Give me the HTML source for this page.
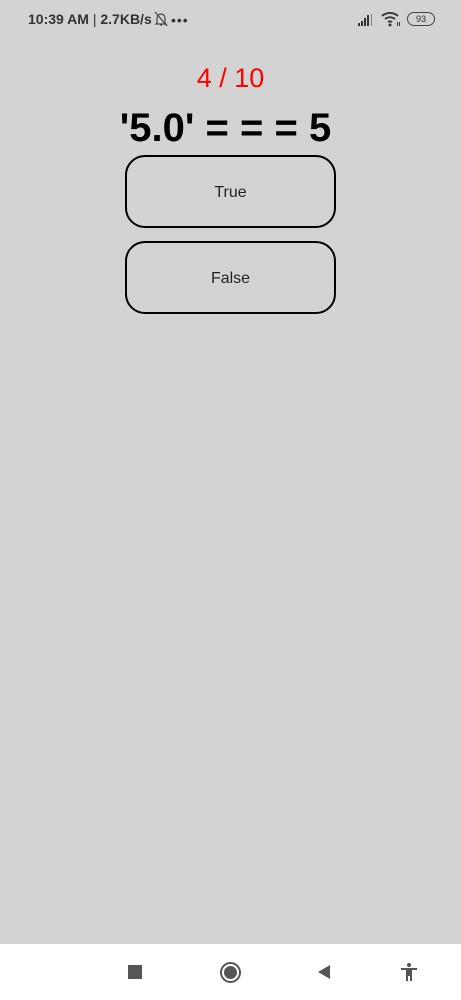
<!DOCTYPE html><html><head><style>
body{margin:0;width:461px;height:1000px;background:#d3d3d3;font-family:"Liberation Sans",sans-serif;position:relative;overflow:hidden}
.a{position:absolute}
.btn{position:absolute;left:125px;width:207px;height:69px;border:2px solid #000;border-radius:20px;text-align:center;line-height:71px;font-size:16px;color:#222}
</style></head><body>
<div class="a" style="left:28px;top:11px;font-size:14px;font-weight:bold;color:#333">10:39 AM <span style="font-weight:normal">|</span> 2.7KB/s</div>
<svg class="a" style="left:154px;top:11px" width="14" height="16" viewBox="0 0 14 16"><path d="M3 12V7a4 4 0 0 1 8 0v5l1 1H2z M6 14h2 M1 1l12 14" stroke="#444" fill="none" stroke-width="1.2"/></svg>
<div class="a" style="left:171px;top:12px;font-size:14px;color:#333;letter-spacing:1px">•••</div>
<svg class="a" style="left:357px;top:13px" width="18" height="14"><rect x="1" y="10" width="2" height="3" fill="#333"/><rect x="4" y="8" width="2" height="5" fill="#333"/><rect x="7" y="5" width="2" height="8" fill="#333"/><rect x="10" y="2" width="2" height="11" fill="#333"/><rect x="14" y="1" width="1" height="12" fill="#888"/></svg>
<svg class="a" style="left:381px;top:11px" width="20" height="16" viewBox="0 0 20 16"><path d="M1 5a12 12 0 0 1 16 0M4 8a8 8 0 0 1 10 0M7 11a4 4 0 0 1 4 0" stroke="#333" stroke-width="1.8" fill="none"/><circle cx="9" cy="14" r="1.5" fill="#333"/><rect x="16" y="11" width="1" height="4" fill="#333"/><rect x="18" y="11" width="1" height="4" fill="#333"/></svg>
<div class="a" style="left:407px;top:12px;width:26px;height:12px;border:1.3px solid #444;border-radius:7px;font-size:9px;text-align:center;line-height:12px;color:#333">93</div>
<div class="a" style="left:0;width:461px;top:63px;text-align:center;font-size:27px;color:#f00">4 / 10</div>
<div class="a" style="left:0;width:451px;top:106px;text-align:center;font-size:40px;font-weight:bold;color:#000">'5.0' = = = 5</div>
<div class="btn" style="top:155px">True</div>
<div class="btn" style="top:241px">False</div>
<div class="a" style="left:0;top:944px;width:461px;height:56px;background:#fff"></div>
<div class="a" style="left:128px;top:965px;width:14px;height:14px;background:#555"></div>
<div class="a" style="left:220px;top:962px;width:21px;height:21px;border:2px solid #555;border-radius:50%;box-sizing:border-box;background:#fff"><div style="margin:2px;width:13px;height:13px;background:#555;border-radius:50%"></div></div>
<svg class="a" style="left:316px;top:964px" width="16" height="16"><path d="M2 8L14 1V15Z" fill="#555"/></svg>
<svg class="a" style="left:400px;top:962px" width="18" height="20"><circle cx="9" cy="3" r="2" fill="#555"/><path d="M1 6h16v2h-5v11h-2v-5h-2v5H6V8H1z" fill="#555"/></svg>
</body></html>
